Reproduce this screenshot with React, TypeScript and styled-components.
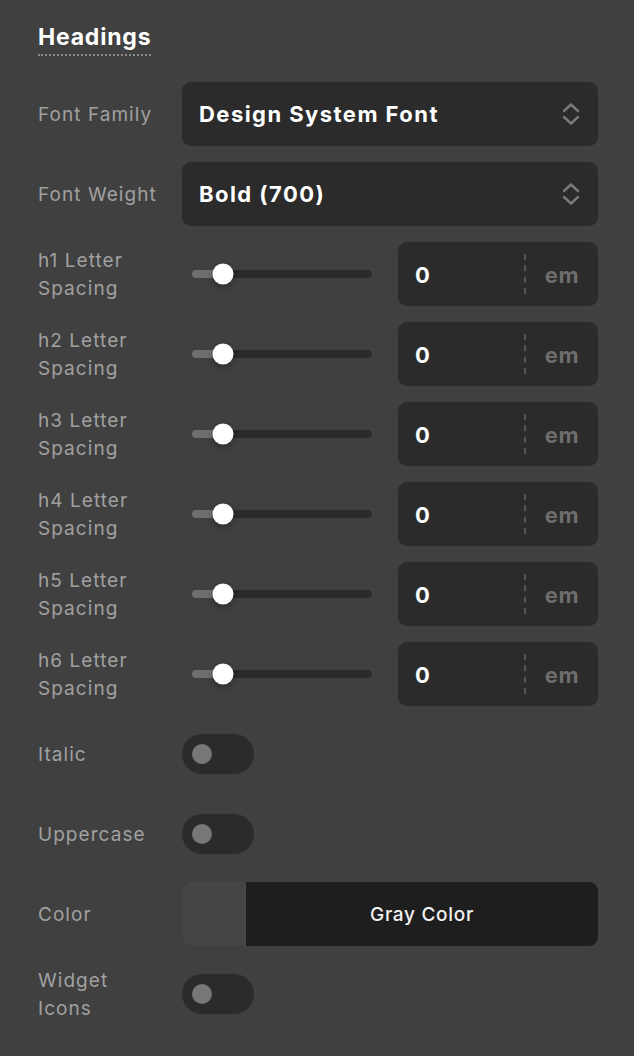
import React from "react";
import styled, { createGlobalStyle } from "styled-components";

const GlobalStyle = createGlobalStyle`
  html, body {
    margin: 0;
    padding: 0;
    background: #404040;
  }
  body {
    font-family: Inter, "Noto Sans", "Liberation Sans", sans-serif;
    -webkit-font-smoothing: antialiased;
  }
`;

const Panel = styled.div`
  width: 634px;
  min-height: 1056px;
  box-sizing: border-box;
  padding: 22px 36px 0 38px;
  background: #404040;
`;

const Title = styled.h2`
  display: inline-block;
  margin: 0;
  font-size: 23px;
  line-height: 30px;
  font-weight: 700;
  color: #ffffff;
  letter-spacing: 0.8px;
  padding-bottom: 2px;
  border-bottom: 2px dotted #8a8a8a;
`;

const Grid = styled.div`
  margin-top: 26px;
  display: grid;
  grid-template-columns: 144px 1fr;
  grid-auto-rows: 64px;
  row-gap: 16px;
  align-items: center;
`;

const Label = styled.div<{ $wide?: boolean }>`
  font-size: 19px;
  line-height: 28px;
  padding-top: 2px;
  color: #a0a0a0;
  letter-spacing: 1.05px;
  max-width: ${(p) => (p.$wide ? "none" : "112px")};
`;

const Select = styled.div`
  height: 64px;
  box-sizing: border-box;
  border-radius: 9px;
  background: #2b2b2b;
  display: flex;
  align-items: center;
  justify-content: space-between;
  padding: 0 18px 0 17px;
  color: #ffffff;
  font-size: 22px;
  font-weight: 700;
  letter-spacing: 1.45px;
`;

const SliderRow = styled.div`
  display: flex;
  align-items: center;
  height: 64px;
`;

const SliderArea = styled.div`
  width: 216px;
  padding: 0 26px 0 10px;
  box-sizing: border-box;
`;

const Track = styled.div`
  position: relative;
  height: 8px;
  border-radius: 4px;
  background: #2b2b2b;
`;

const Fill = styled.div`
  position: absolute;
  left: 0;
  top: 0;
  bottom: 0;
  border-radius: 4px 0 0 4px;
  background: #6f6f6f;
`;

const Thumb = styled.div`
  position: absolute;
  top: 50%;
  width: 21px;
  height: 21px;
  border-radius: 50%;
  background: #ffffff;
  transform: translate(-50%, -50%);
  box-shadow: 0 2px 6px rgba(0, 0, 0, 0.35);
`;

const NumberBox = styled.div`
  width: 200px;
  height: 64px;
  box-sizing: border-box;
  border-radius: 9px;
  background: #2b2b2b;
  display: flex;
  align-items: center;
`;

const NumberValue = styled.div`
  width: 126px;
  box-sizing: border-box;
  padding-left: 17px;
  padding-top: 2px;
  color: #ffffff;
  font-size: 22px;
  font-weight: 700;
`;

const Divider = styled.div`
  width: 0;
  height: 40px;
  border-left: 2px dashed #555555;
`;

const Unit = styled.div`
  flex: 1;
  text-align: center;
  color: #6d6d6d;
  font-size: 22px;
  font-weight: 700;
  padding-top: 2px;
  letter-spacing: 0.6px;
`;

const Toggle = styled.div`
  width: 72px;
  height: 40px;
  border-radius: 20px;
  background: #2b2b2b;
  display: flex;
  align-items: center;
  padding-left: 10px;
  box-sizing: border-box;
`;

const Knob = styled.div`
  width: 20px;
  height: 20px;
  border-radius: 50%;
  background: #777777;
`;

const ColorBox = styled.div`
  height: 64px;
  display: flex;
  border-radius: 9px;
  overflow: hidden;
  background: #1e1e1e;
`;

const Swatch = styled.div<{ $color: string }>`
  width: 64px;
  background: ${(p) => p.$color};
`;

const ColorName = styled.div`
  flex: 1;
  display: flex;
  align-items: center;
  justify-content: center;
  color: #f2f2f2;
  font-size: 19px;
  font-weight: 500;
  letter-spacing: 0.7px;
`;

const Chevron = () => (
  <svg width="18" height="24" viewBox="0 0 18 24" fill="none">
    <path
      d="M2 9 L9 2.5 L16 9"
      stroke="#7a7a7a"
      strokeWidth="2.4"
      strokeLinecap="round"
      strokeLinejoin="round"
    />
    <path
      d="M2 15 L9 21.5 L16 15"
      stroke="#7a7a7a"
      strokeWidth="2.4"
      strokeLinecap="round"
      strokeLinejoin="round"
    />
  </svg>
);

const SpacingControl = ({ value }: { value: number }) => (
  <SliderRow>
    <SliderArea>
      <Track>
        <Fill style={{ width: "17%" }} />
        <Thumb style={{ left: "17%" }} />
      </Track>
    </SliderArea>
    <NumberBox>
      <NumberValue>{value}</NumberValue>
      <Divider />
      <Unit>em</Unit>
    </NumberBox>
  </SliderRow>
);

export default function App() {
  const levels = ["h1", "h2", "h3", "h4", "h5", "h6"];
  return (
    <Panel>
      <GlobalStyle />
      <Title>Headings</Title>
      <Grid>
        <Label $wide>Font Family</Label>
        <Select>
          <span>Design System Font</span>
          <Chevron />
        </Select>
        <Label $wide>Font Weight</Label>
        <Select>
          <span>Bold (700)</span>
          <Chevron />
        </Select>
        {levels.map((h) => (
          <React.Fragment key={h}>
            <Label>{h} Letter Spacing</Label>
            <SpacingControl value={0} />
          </React.Fragment>
        ))}
        <Label>Italic</Label>
        <Toggle>
          <Knob />
        </Toggle>
        <Label>Uppercase</Label>
        <Toggle>
          <Knob />
        </Toggle>
        <Label>Color</Label>
        <ColorBox>
          <Swatch $color="#454545" />
          <ColorName>Gray Color</ColorName>
        </ColorBox>
        <Label>Widget Icons</Label>
        <Toggle>
          <Knob />
        </Toggle>
      </Grid>
    </Panel>
  );
}
